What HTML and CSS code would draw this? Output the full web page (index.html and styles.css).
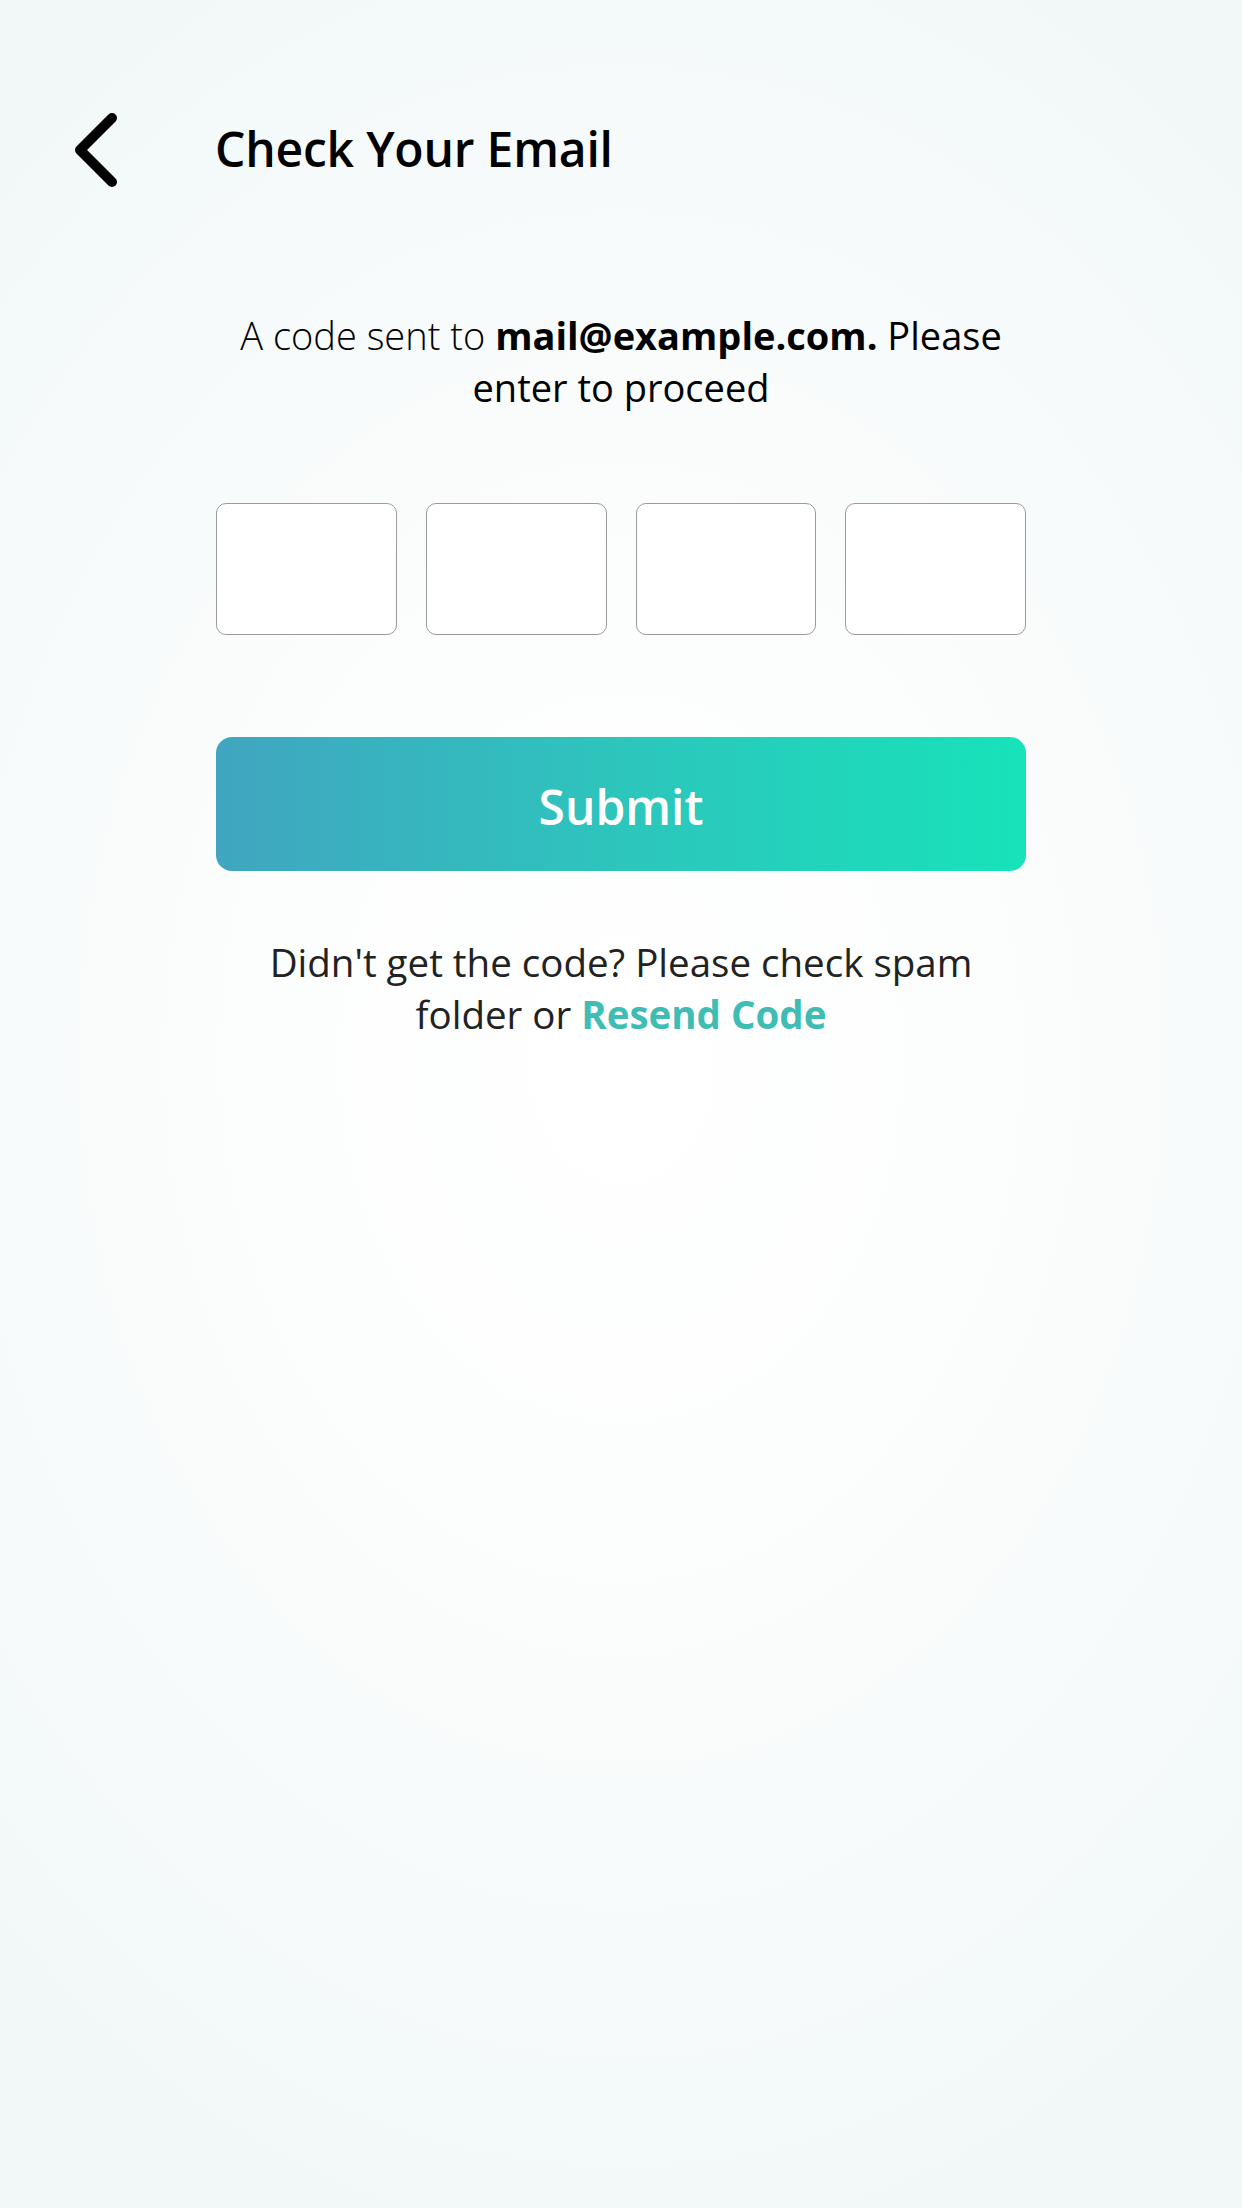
FILE: index.html
```html
<!DOCTYPE html>
<html lang="en">
<head>
<meta charset="utf-8">
<title>Check Your Email</title>
<link rel="stylesheet" href="styles.css">
</head>
<body>
<div class="screen">
  <header class="header">
    <button class="back" aria-label="Back">
      <svg width="48" height="80" viewBox="0 0 48 80"><path d="M40 8 L8 40 L40 72" fill="none" stroke="#000" stroke-width="10" stroke-linecap="round" stroke-linejoin="round"/></svg>
    </button>
    <h1 class="title">Check Your Email</h1>
  </header>
  <main class="content">
    <p class="intro"><span class="light">A code sent to </span><strong class="email">mail@example.com.</strong> Please enter to proceed</p>
    <div class="code">
      <input class="digit" type="text" maxlength="1">
      <input class="digit" type="text" maxlength="1">
      <input class="digit" type="text" maxlength="1">
      <input class="digit" type="text" maxlength="1">
    </div>
    <button class="submit">Submit</button>
    <p class="resend">Didn't get the code? Please check spam folder or <a class="link">Resend Code</a></p>
  </main>
</div>
</body>
</html>
```
FILE: styles.css
```css
html, body {
  margin: 0;
  padding: 0;
}
body {
  width: 1242px;
  height: 2208px;
  overflow: hidden;
  font-family: "Open Sans", "Noto Sans", sans-serif;
  background: radial-gradient(ellipse 75% 55% at 50% 48%, #ffffff 0%, #fcfdfd 40%, #f2f8f8 100%);
  color: #000;
}
.screen {
  display: flex;
  flex-direction: column;
}
.header {
  display: flex;
  align-items: center;
  height: 80px;
  padding: 110px 0 0 72px;
}
.back {
  border: 0;
  background: none;
  padding: 0;
  margin: 0;
  width: 48px;
  height: 80px;
  display: flex;
}
.title {
  margin: -4px 0 0 95px;
  font-size: 48px;
  font-weight: 600;
  letter-spacing: -0.2px;
}
.content {
  display: flex;
  flex-direction: column;
  padding: 0 216px;
}
.intro {
  margin: 119px 0 0;
  text-align: center;
  font-size: 38px;
  line-height: 52px;
  color: #000;
}
.light {
  font-weight: 300;
}
.email {
  display: inline-block;
  font-weight: 700;
}
.code {
  display: flex;
  gap: 29px;
  margin-top: 90px;
}
.digit {
  flex: 1;
  min-width: 0;
  height: 132px;
  box-sizing: border-box;
  border: 1.5px solid #9a9a9a;
  border-radius: 10px;
  background: #fff;
  margin: 0;
  padding: 0;
}
.submit {
  margin-top: 102px;
  height: 134px;
  border: 0;
  border-radius: 16px;
  background: linear-gradient(90deg, #40a5c0 0%, #2fc2bd 45%, #17e3b9 100%);
  color: #fff;
  font-family: inherit;
  font-size: 48px;
  font-weight: 600;
  padding-top: 6px;
}
.resend {
  margin: 65px 0 0;
  text-align: center;
  font-size: 38.5px;
  line-height: 52px;
  color: #222;
}
.link {
  display: inline-block;
  color: #3fbdb5;
  font-weight: 700;
}
```
